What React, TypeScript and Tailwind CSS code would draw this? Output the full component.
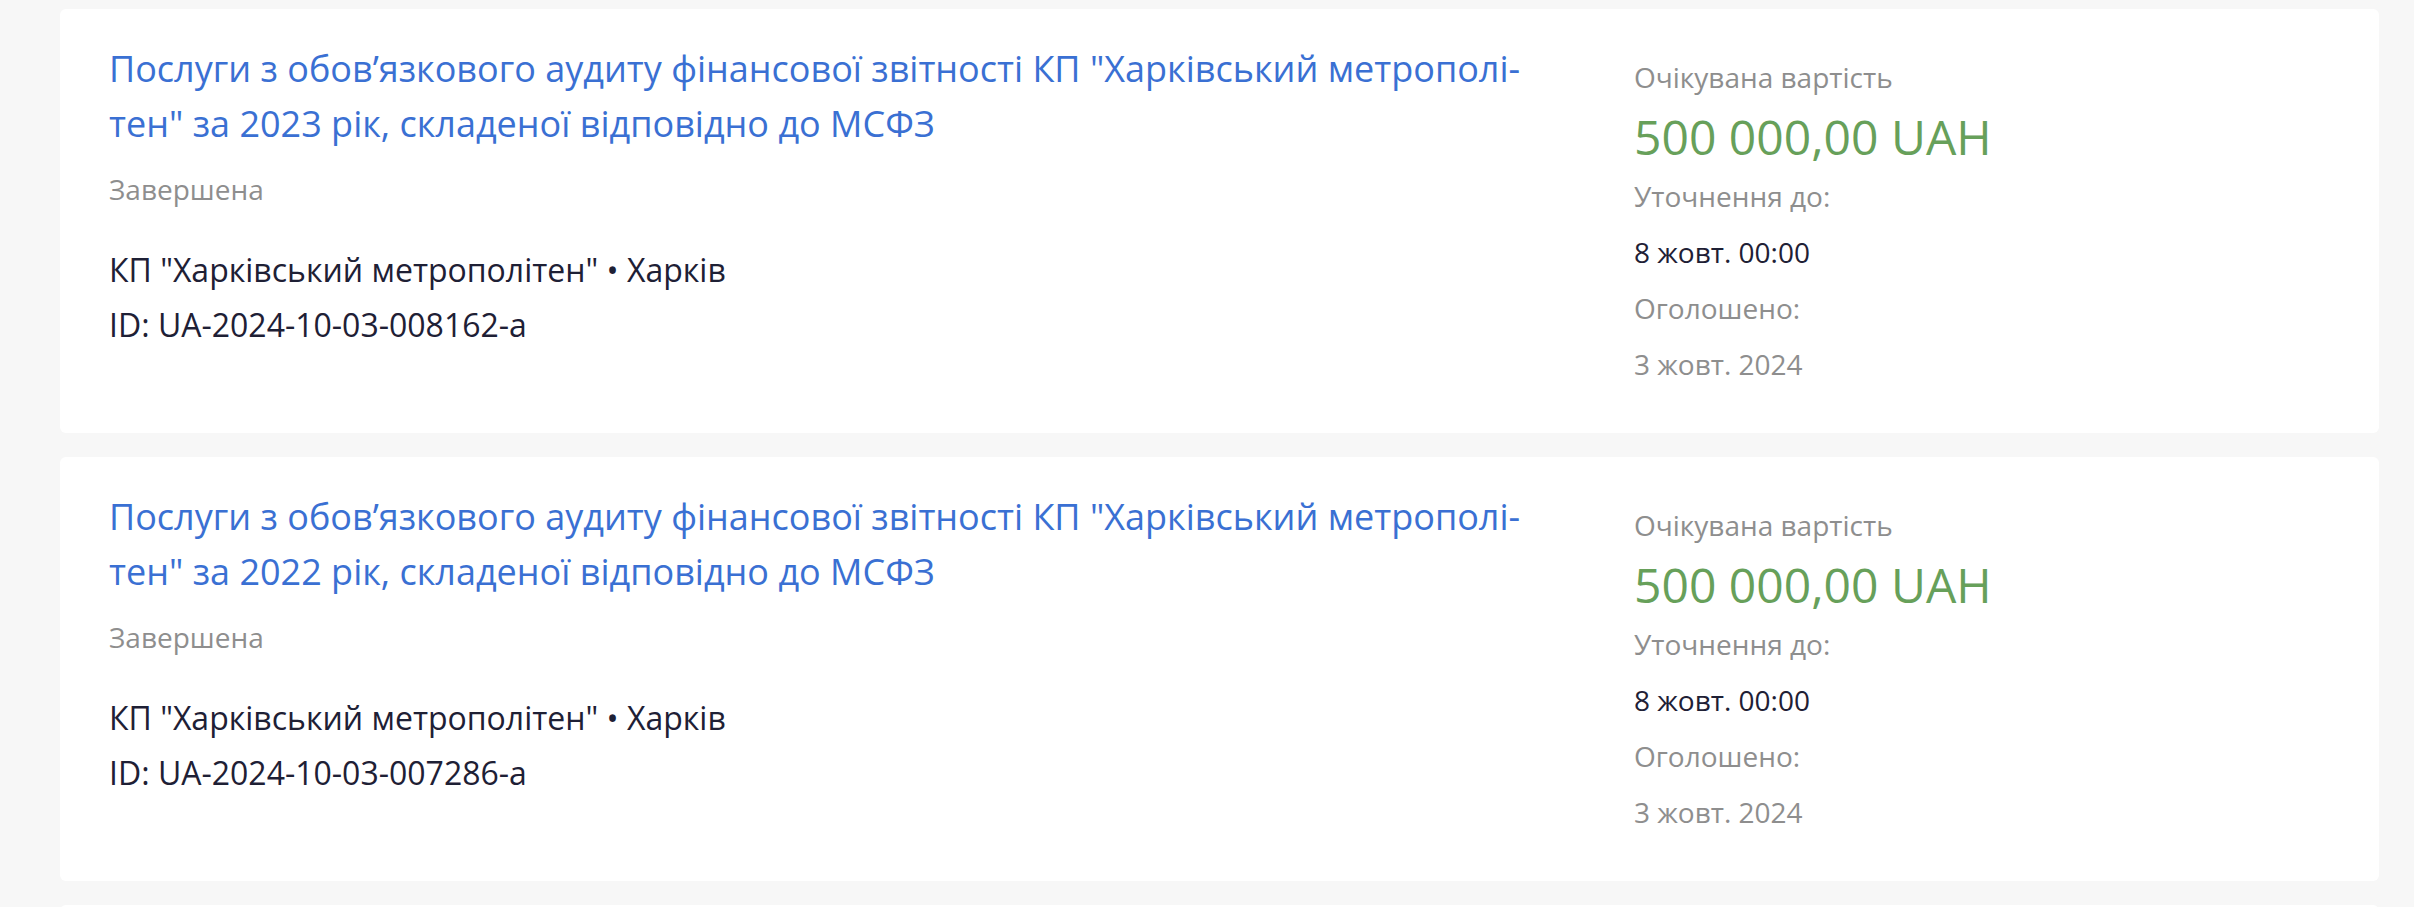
import React from "react";

type Item = { year: string; id: string };

const items: Item[] = [
  { year: "2023", id: "UA-2024-10-03-008162-a" },
  { year: "2022", id: "UA-2024-10-03-007286-a" },
];

function Card({ item }: { item: Item }) {
  return (
    <div className="flex h-[424px] shrink-0 rounded-[6px] bg-white px-[49px]">
      <div className="flex-1 pt-[32px]">
        <a className="block text-[36px] leading-[55px] text-[#3a70d3]" href="#">
          <span className="block whitespace-nowrap">
            Послуги з обов’язкового аудиту фінансової звітності КП "Харківський метрополі-
          </span>
          <span className="block whitespace-nowrap">
            тен" за {item.year} рік, складеної відповідно до МСФЗ
          </span>
        </a>
        <div className="mt-[17px] text-[28px] leading-[42px] text-[#8e8e8e]">Завершена</div>
        <div className="mt-[32px] text-[32px] leading-[55px] text-[#1e2035]">
          <div>КП "Харківський метрополітен" • Харків</div>
          <div>ID: {item.id}</div>
        </div>
      </div>
      <div className="w-[696px] shrink-0 pt-[40px]">
        <div className="text-[28px] leading-[56px] text-[#8e8e8e]">Очікувана вартість</div>
        <div className="text-[48px] leading-[63px] text-[#67a05a]">500 000,00 UAH</div>
        <div className="text-[28px] leading-[56px] text-[#8e8e8e]">Уточнення до:</div>
        <div className="text-[28px] leading-[56px] text-[#1e2035]">8 жовт. 00:00</div>
        <div className="text-[28px] leading-[56px] text-[#8e8e8e]">Оголошено:</div>
        <div className="text-[28px] leading-[56px] text-[#8e8e8e]">3 жовт. 2024</div>
      </div>
    </div>
  );
}

export default function App() {
  return (
    <div
      className="h-[907px] overflow-hidden bg-[#f7f7f7] pl-[60px] pr-[35px] pt-[9px]"
      style={{ fontFamily: '"Open Sans", "Noto Sans", sans-serif' }}
    >
      <div className="flex flex-col gap-[24px]">
        {items.map((it) => (
          <Card key={it.id} item={it} />
        ))}
        <div className="h-[424px] shrink-0 rounded-[6px] bg-white" />
      </div>
    </div>
  );
}
